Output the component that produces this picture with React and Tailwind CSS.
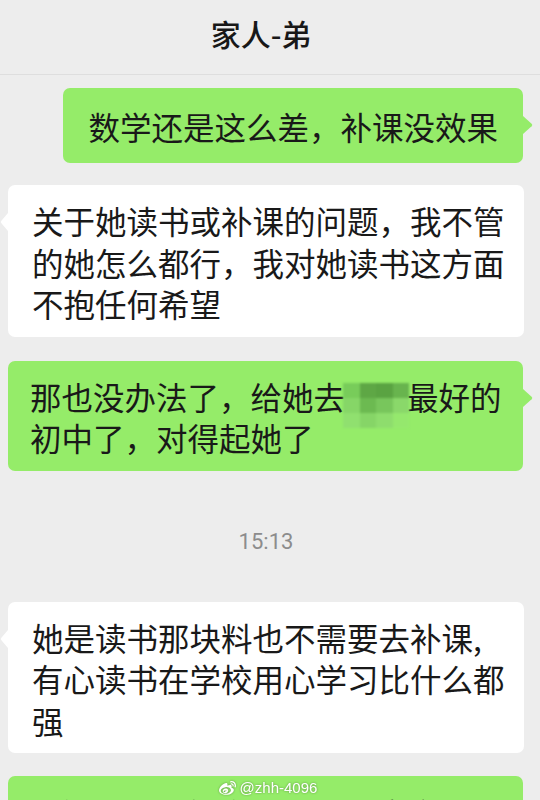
import React from 'react';
import { FaWeibo } from 'react-icons/fa';

const cjk = { fontFamily: '"Noto Sans CJK SC", "Noto Sans", sans-serif' };

function Tail({ side, color }) {
  // little arrow on the bubble, centred on the first line
  if (side === 'right') {
    return (
      <svg className="absolute top-[28px] right-[-10px]" width="10" height="18" viewBox="0 0 10 18">
        <path d="M0 0 L8.6 7.7 Q10 9 8.6 10.3 L0 18 Z" fill={color} />
      </svg>
    );
  }
  return (
    <svg className="absolute top-[28px] left-[-8px]" width="8" height="18" viewBox="0 0 8 18">
      <path d="M8 0 L1.4 7.7 Q0 9 1.4 10.3 L8 18 Z" fill={color} />
    </svg>
  );
}

function Mosaic() {
  const cells = [
    'bg-[#78cc5a]', 'bg-[#5ea745]', 'bg-[#5aa342]', 'bg-[#68b44e]',
    'bg-[#86d667]', 'bg-[#6cba51]', 'bg-[#78c65c]', 'bg-[#8ad86a]',
    'bg-[#90e06f]', 'bg-[#86d567]', 'bg-[#8edd6d]', 'bg-[#95e86d]',
  ];
  return (
    <span className="inline-block relative w-[62px] h-[31px] align-middle">
      <span className="absolute left-[-2px] top-[-2px] grid grid-cols-4 w-[66px] blur-[1px]">
        {cells.map((c, i) => (
          <span key={i} className={`block h-[15px] ${c}`} />
        ))}
      </span>
    </span>
  );
}

export default function App() {
  return (
    <div className="relative w-[540px] h-[800px] overflow-hidden bg-[#ededed] text-[#191919]" style={cjk}>
      {/* title bar */}
      <div className="h-[75px] border-b border-[#dedede] flex items-center justify-center pb-[9px] pr-[18px]">
        <span className="text-[30px] leading-none font-medium text-[#181818]">家人-弟</span>
      </div>

      <div className="flex flex-col pt-[13px]">
        {/* me */}
        <div className="flex justify-end pr-[17px]">
          <div className="relative bg-[#95ec69] rounded-[7px] px-[25px] py-[16.5px] text-[31.5px] leading-[42px] whitespace-nowrap">
            数学还是这么差，补课没效果
            <Tail side="right" color="#95ec69" />
          </div>
        </div>

        {/* brother */}
        <div className="flex pl-[8px] mt-[22px]">
          <div className="relative bg-white rounded-[7px] w-[516px] pl-[24px] pr-[18px] pt-[15px] pb-[12px] text-[31.5px] leading-[41.5px] whitespace-nowrap">
            关于她读书或补课的问题，我不管<br />
            的她怎么都行，我对她读书这方面<br />
            不抱任何希望
            <Tail side="left" color="#ffffff" />
          </div>
        </div>

        <div className="flex pl-[8px] pr-[17px] mt-[24px]">
          <div className="relative bg-[#95ec69] rounded-[7px] w-[515px] pl-[22px] pr-[16px] pt-[15px] pb-[12px] text-[31.5px] leading-[41.5px] whitespace-nowrap">
            那也没办法了，给她去<Mosaic />最好的<br />
            初中了，对得起她了
            <Tail side="right" color="#95ec69" />
          </div>
        </div>

        {/* time */}
        <div className="mt-[60px] mb-[49px] h-[22px] flex items-center justify-center pr-[8px]">
          <span className="text-[22px] leading-none text-[#8c8c8c]" style={{ fontFamily: 'Roboto, "Liberation Sans", sans-serif' }}>
            15:13
          </span>
        </div>

        <div className="flex pl-[8px]">
          <div className="relative bg-white rounded-[7px] w-[516px] pl-[24px] pr-[18px] pt-[15px] pb-[12px] text-[31.5px] leading-[41.5px] whitespace-nowrap">
            她是读书那块料也不需要去补课,<br />
            有心读书在学校用心学习比什么都<br />
            强
            <Tail side="left" color="#ffffff" />
          </div>
        </div>

        <div className="flex pl-[8px] mt-[23px]">
          <div className="relative bg-[#95ec69] rounded-[7px] w-[515px] pl-[22px] pr-[16px] pt-[17px] pb-[12px] text-[31.5px] leading-[41.5px] whitespace-nowrap">
            关键还是看她自己愿不愿意学习<br />
            学校再好也没有用
            <Tail side="right" color="#95ec69" />
          </div>
        </div>
      </div>

      {/* watermark */}
      <div className="absolute left-0 right-0 top-[778px] flex items-center justify-center gap-[4px] pr-[4px] text-white drop-shadow-[0_0_1px_rgba(0,0,0,0.35)]">
        <FaWeibo size={17} />
        <span className="text-[15px] leading-[20px]" style={{ fontFamily: '"Liberation Sans", Arial, sans-serif' }}>@zhh-4096</span>
      </div>
    </div>
  );
}
